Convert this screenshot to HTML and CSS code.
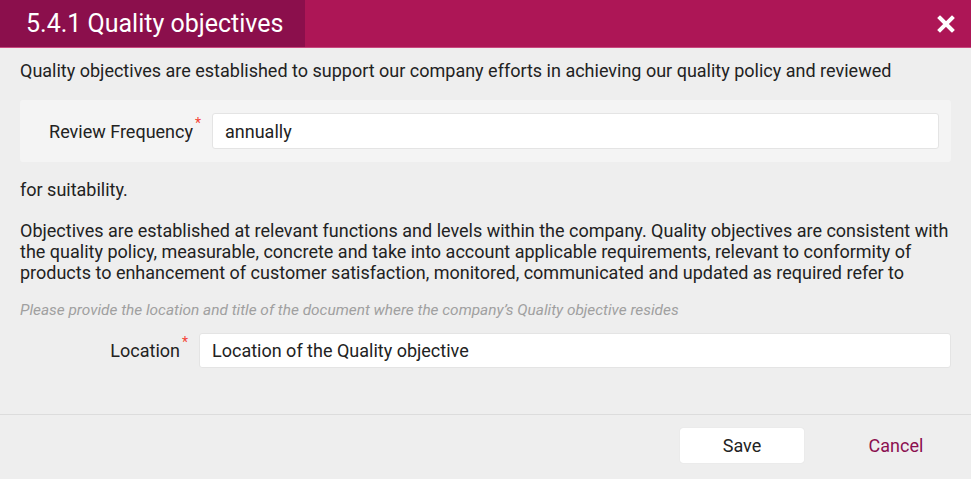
FILE: index.html
```html
<!DOCTYPE html>
<html lang="en">

<head>
    <meta charset="UTF-8">
    <meta name="viewport" content="width=device-width, initial-scale=1.0">
    <title>5.4.1 Quality objectives</title>
    <link rel="stylesheet" href="styles.css">
</head>

<body>
    <div class="dialog">
        <div class="dialog-header">
            <h1 class="dialog-title">5.4.1 Quality objectives</h1>
            <button type="button" class="close-btn" aria-label="Close">
                <svg width="18" height="18" viewBox="0 0 18 18">
                    <path d="M3 3 L15 15 M15 3 L3 15" stroke="#fff" stroke-width="4" stroke-linecap="square"/>
                </svg>
            </button>
        </div>

        <div class="dialog-body">
            <p class="text">Quality objectives are established to support our company efforts in achieving our quality policy and reviewed</p>

            <div class="field-panel">
                <label class="field-label panel-label" for="frequency">Review Frequency<span class="req">*</span></label>
                <input type="text" id="frequency" class="field-input" value="annually">
            </div>

            <p class="text after-panel">for suitability.</p>

            <p class="text paragraph">Objectives are established at relevant functions and levels within the company. Quality objectives are consistent with the quality policy, measurable, concrete and take into account applicable requirements, relevant to conformity of products to enhancement of customer satisfaction, monitored, communicated and updated as required refer to</p>

            <p class="hint">Please provide the location and title of the document where the company’s Quality objective resides</p>

            <div class="field-row">
                <label class="field-label row-label" for="location">Location<span class="req">*</span></label>
                <input type="text" id="location" class="field-input" value="Location of the Quality objective">
            </div>
        </div>

        <div class="dialog-footer">
            <button type="button" class="btn btn-save">Save</button>
            <button type="button" class="btn btn-cancel">Cancel</button>
        </div>
    </div>
</body>

</html>
```

FILE: styles.css
```css
* {
    box-sizing: border-box;
    margin: 0;
    padding: 0;
}

body {
    background-color: #eeeeee;
    font-family: Roboto, 'Liberation Sans', sans-serif;
    color: #222;
}

.dialog {
    width: 971px;
    height: 479px;
    background-color: #eeeeee;
}

.dialog-header {
    display: flex;
    justify-content: space-between;
    align-items: center;
    height: 48px;
    background-color: #ad1656;
    border-bottom: 1px solid #c9487f;
}

.dialog-title {
    display: flex;
    align-items: center;
    width: 305px;
    height: 47px;
    padding-left: 26px;
    background-color: #8b0f4c;
    color: #fff;
    font-size: 25px;
    font-weight: 400;
}

.close-btn {
    display: flex;
    background: none;
    border: none;
    margin-right: 16px;
    cursor: pointer;
}

.dialog-body {
    padding: 12px 20px 0 20px;
    height: 367px;
    border-bottom: 1px solid #dcdcdc;
}

.text {
    font-size: 18px;
    line-height: 21px;
}

.field-panel {
    display: flex;
    align-items: center;
    height: 62px;
    margin-top: 19px;
    padding-right: 12px;
    background-color: #f4f4f4;
    border-radius: 3px;
}

.field-label {
    flex: none;
    font-size: 18px;
    text-align: right;
    position: relative;
}

.panel-label {
    width: 192px;
    padding-right: 19px;
}

.row-label {
    width: 179px;
    padding-right: 19px;
}

.req {
    position: absolute;
    right: 11px;
    top: -6px;
    color: #f44336;
    font-size: 14px;
}

.field-input {
    flex: 1;
    height: 36px;
    padding: 0 12px;
    font-family: inherit;
    font-size: 18px;
    color: #222;
    background-color: #fff;
    border: 1px solid #e4e4e4;
    border-radius: 3px;
}

.after-panel {
    margin-top: 17px;
}

.paragraph {
    margin-top: 20px;
}

.hint {
    margin-top: 17px;
    font-size: 15.4px;
    line-height: 20px;
    font-style: italic;
    color: #a0a0a0;
}

.field-row {
    display: flex;
    align-items: center;
    margin-top: 13px;
}

.field-row .field-input {
    height: 35px;
}

.dialog-footer {
    display: flex;
    justify-content: flex-end;
    gap: 30px;
    padding: 13px 13px 0 0;
}

.btn {
    width: 124px;
    height: 35px;
    font-family: inherit;
    font-size: 18px;
    border: none;
    border-radius: 3px;
    cursor: pointer;
}

.btn-save {
    background-color: #fff;
    color: #222;
    box-shadow: 0 0 1px rgba(0, 0, 0, 0.15);
}

.btn-cancel {
    background: none;
    color: #8b1050;
}
```
